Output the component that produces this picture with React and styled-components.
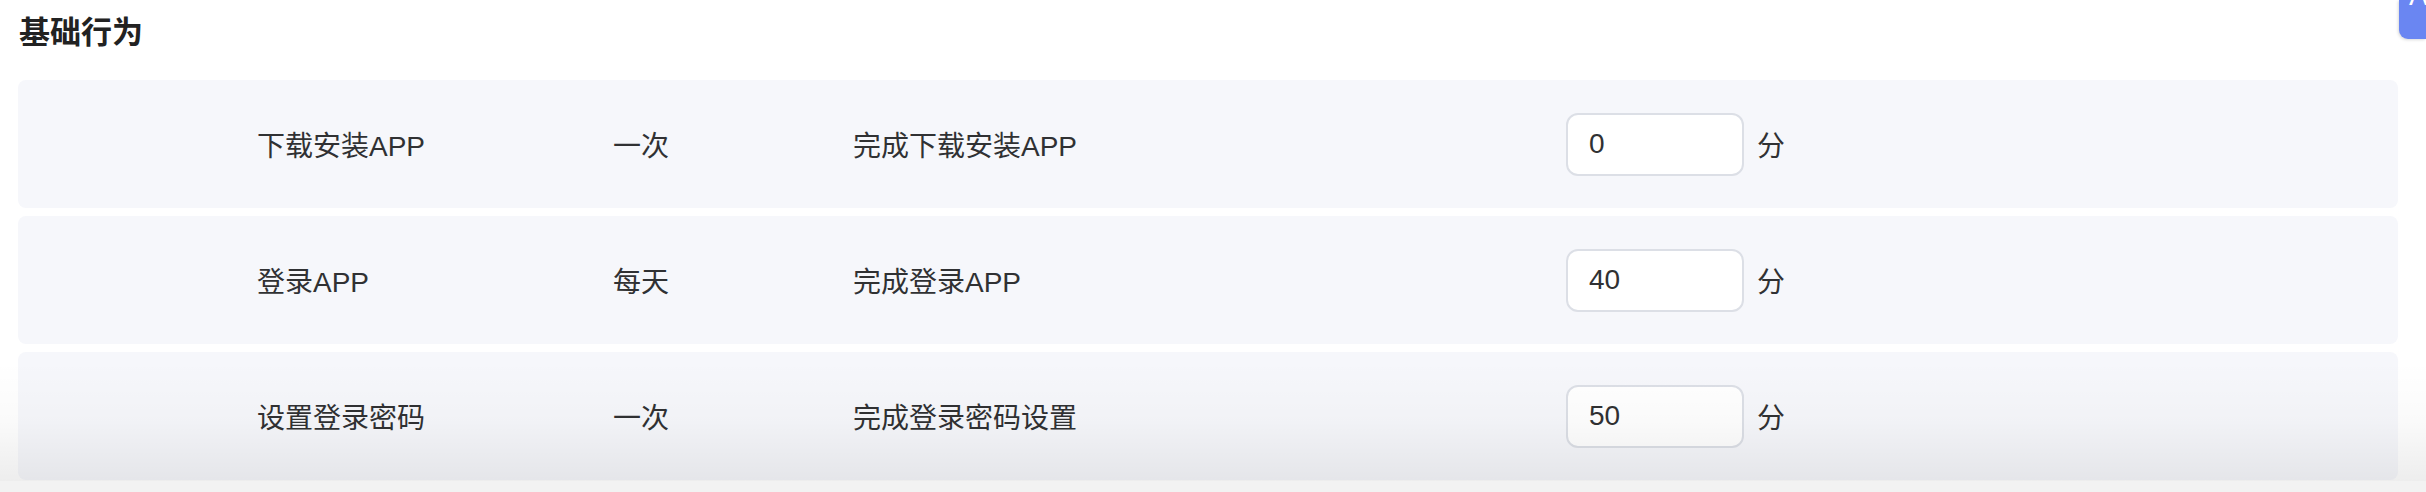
import React, { useState } from 'react';
import styled, { createGlobalStyle } from 'styled-components';

const GlobalStyle = createGlobalStyle`
  html, body {
    margin: 0;
    padding: 0;
    background: #ffffff;
    font-family: "Liberation Sans", "Noto Sans CJK SC", sans-serif;
    color: #303133;
  }
`;

const Page = styled.div`
  position: relative;
  height: 492px;
  overflow: hidden;
  padding: 18px 28px 0 18px;
  box-sizing: border-box;
`;

const Title = styled.h2`
  margin: 0 0 32px 1px;
  font-size: 31px;
  line-height: 30px;
  font-weight: 700;
  color: #222222;
`;

const List = styled.div`
  display: flex;
  flex-direction: column;
  gap: 8px;
`;

const Card = styled.div`
  display: grid;
  grid-template-columns: 356px 240px 713px auto;
  align-items: center;
  height: 128px;
  padding-left: 239px;
  background: #f6f7fb;
  border-radius: 8px;
  font-size: 28px;
  color: #303133;
`;

const Cell = styled.div`
  white-space: nowrap;
`;

const ScoreBox = styled.div`
  display: flex;
  align-items: center;
  gap: 13px;
`;

const ScoreInput = styled.input`
  width: 178px;
  height: 63px;
  box-sizing: border-box;
  border: 2px solid #dcdfe6;
  border-radius: 12px;
  background: #ffffff;
  padding: 0 0 0 21px;
  font-family: "Liberation Sans", "Noto Sans CJK SC", sans-serif;
  font-size: 28px;
  color: #303133;
  outline: none;
`;

const Unit = styled.span`
  font-size: 28px;
`;

const FloatTab = styled.div`
  position: absolute;
  top: 0;
  right: 0;
  width: 27px;
  height: 39px;
  overflow: hidden;
  background: #6a86f2;
  border-bottom-left-radius: 9px;
  box-shadow: -1px 1px 3px rgba(0, 0, 0, 0.15);
  color: #ffffff;
  font-size: 28px;
  line-height: 28px;
`;

const TabText = styled.span`
  display: block;
  margin: -18px 0 0 10px;
`;

const BottomFade = styled.div`
  position: absolute;
  left: 0;
  right: 0;
  bottom: 11px;
  height: 120px;
  pointer-events: none;
  background: linear-gradient(rgba(0, 0, 0, 0), rgba(0, 0, 0, 0.02) 50%, rgba(0, 0, 0, 0.07));
`;

const BottomStrip = styled.div`
  position: absolute;
  left: 0;
  right: 0;
  bottom: 0;
  height: 11px;
  background: rgba(0, 0, 0, 0.05);
`;

const rules = [
  { name: '下载安装APP', freq: '一次', desc: '完成下载安装APP', score: '0' },
  { name: '登录APP', freq: '每天', desc: '完成登录APP', score: '40' },
  { name: '设置登录密码', freq: '一次', desc: '完成登录密码设置', score: '50' },
];

const App = () => {
  const [scores, setScores] = useState(rules.map(r => r.score));

  const handleChange = (i, v) => {
    const next = [...scores];
    next[i] = v;
    setScores(next);
  };

  return (
    <Page>
      <GlobalStyle />
      <Title>基础行为</Title>
      <List>
        {rules.map((r, i) => (
          <Card key={r.name}>
            <Cell>{r.name}</Cell>
            <Cell>{r.freq}</Cell>
            <Cell>{r.desc}</Cell>
            <ScoreBox>
              <ScoreInput value={scores[i]} onChange={e => handleChange(i, e.target.value)} />
              <Unit>分</Unit>
            </ScoreBox>
          </Card>
        ))}
      </List>
      <FloatTab>
        <TabText>A</TabText>
      </FloatTab>
      <BottomFade />
      <BottomStrip />
    </Page>
  );
};

export default App;
